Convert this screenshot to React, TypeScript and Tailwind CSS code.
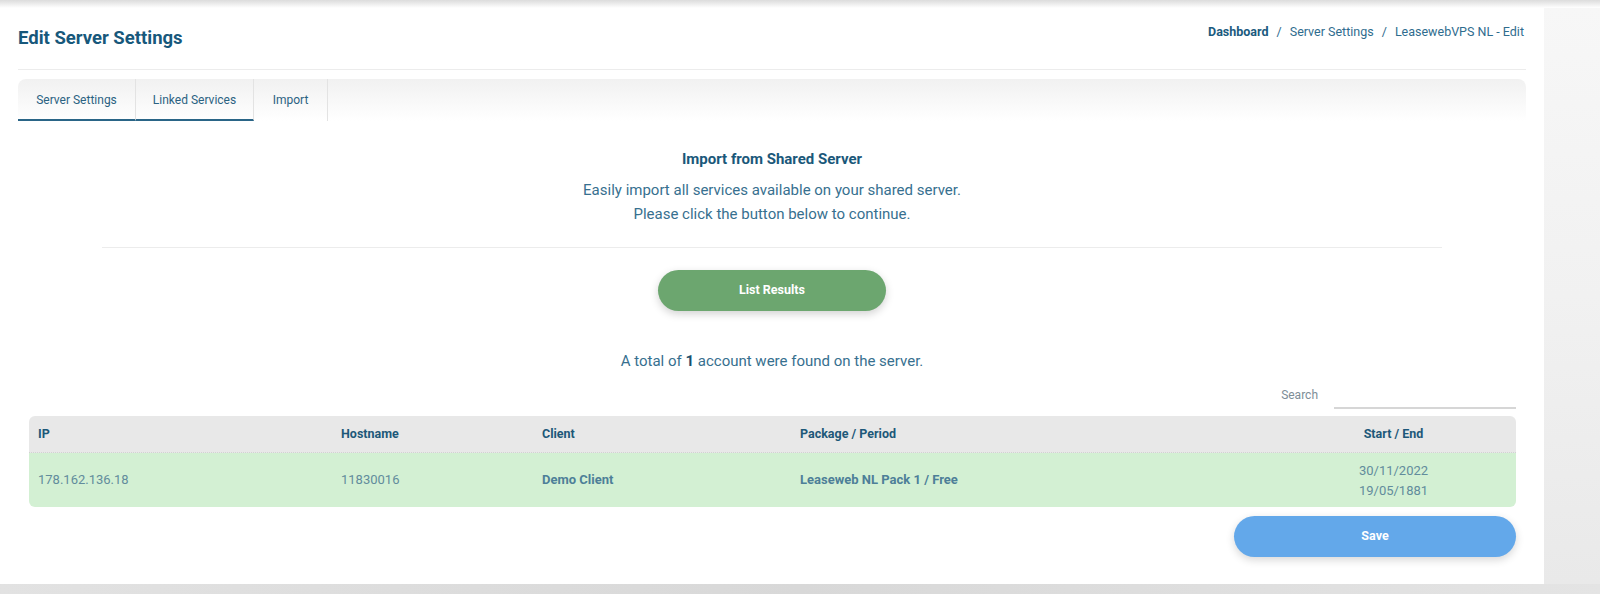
import React from "react";

const tabs = [
  { label: "Server Settings", w: "w-[118px]", underline: true },
  { label: "Linked Services", w: "w-[118px]", underline: true },
  { label: "Import", w: "w-[74px]", underline: false },
];

const rows = [
  {
    ip: "178.162.136.18",
    hostname: "11830016",
    client: "Demo Client",
    pkg: "Leaseweb NL Pack 1 / Free",
    start: "30/11/2022",
    end: "19/05/1881",
  },
];

export default function App() {
  return (
    <div
      className="relative h-[594px] w-[1600px] overflow-hidden bg-[#e6e6e6]"
      style={{ fontFamily: "Roboto, 'Noto Sans', sans-serif" }}
    >
      {/* top nav shadow */}
      <div className="h-[8px] w-full bg-gradient-to-b from-[#dcdcdc] to-white" />

      <div className="flex">
        <div className="h-[576px] w-[1544px] bg-white">
          {/* header */}
          <div className="px-[18px] pt-[17px]">
            <div className="flex items-start justify-between">
              <h1 className="text-[18.5px] font-bold leading-[26px] text-[#17587b]">Edit Server Settings</h1>
              <div className="mr-[2px] -mt-[2px] text-[12.5px] leading-[18px] text-[#2f6c8e]">
                <span className="font-bold text-[#1b5a7e]">Dashboard</span>
                <span className="mx-[8px]">/</span>
                <span>Server Settings</span>
                <span className="mx-[8px]">/</span>
                <span>LeasewebVPS NL - Edit</span>
              </div>
            </div>
            <div className="mt-[18px] h-px bg-[#ececec]" />

            {/* tabs */}
            <div className="mt-[9px] flex h-[42px] rounded-t-[8px] bg-gradient-to-b from-[#f1f1f1] to-white">
              {tabs.map((t) => (
                <div
                  key={t.label}
                  className={`flex ${t.w} items-center justify-center border-r border-[#e3e3e3] text-[12px] text-[#2b6282] ${
                    t.underline ? "border-b-2 border-b-[#2a6587] pt-[2px]" : ""
                  }`}
                >
                  {t.label}
                </div>
              ))}
            </div>
          </div>

          {/* import section */}
          <div className="flex flex-col items-center">
            <h2 className="mt-[28px] text-[15px] font-bold leading-[20px] text-[#1a587a]">Import from Shared Server</h2>
            <p className="mt-[9px] text-center text-[15px] leading-[24px] text-[#37708f]">
              Easily import all services available on your shared server.
              <br />
              Please click the button below to continue.
            </p>
          </div>
          <div className="mx-[102px] mt-[21px] h-px bg-[#ececec]" />

          <div className="flex justify-center">
            <button className="mt-[22px] h-[41px] w-[228px] rounded-full bg-[#6ca66f] text-[12.5px] font-bold text-white shadow-[0_3px_8px_rgba(0,0,0,0.18)]">
              List Results
            </button>
          </div>

          <p className="mt-[40px] text-center text-[15px] leading-[20px] text-[#37708f]">
            A total of <span className="font-bold text-[#1a4f6e]">1</span> account were found on the server.
          </p>

          {/* search */}
          <div className="mr-[28px] mt-[10px] flex h-[28px] items-center justify-end">
            <span className="mr-[16px] text-[12px] text-[#7d8d97]">Search</span>
            <div className="h-[28px] w-[182px] border-b-2 border-[#d6d6d6]" />
          </div>

          {/* table */}
          <div className="ml-[29px] mt-[7px] w-[1487px]">
            <div className="grid h-[37px] grid-cols-[312px_201px_258px_471px_245px] items-center rounded-t-[6px] border-b border-dotted border-[#d2d2d2] bg-[#e8e8e8] text-[12.5px] font-bold text-[#1d5879]">
              <div className="pl-[9px]">IP</div>
              <div>Hostname</div>
              <div>Client</div>
              <div>Package / Period</div>
              <div className="text-center">Start / End</div>
            </div>
            {rows.map((r) => (
              <div
                key={r.ip}
                className="grid h-[54px] grid-cols-[312px_201px_258px_471px_245px] items-center rounded-b-[6px] bg-[#d3f0d3] text-[13px] text-[#628c9c]"
              >
                <div className="pl-[9px]">{r.ip}</div>
                <div>{r.hostname}</div>
                <div className="font-bold text-[#4d7f98]">{r.client}</div>
                <div className="font-bold text-[#4d7f98]">{r.pkg}</div>
                <div className="pt-[2px] text-center leading-[20px]">
                  {r.start}
                  <br />
                  {r.end}
                </div>
              </div>
            ))}
          </div>

          <div className="mr-[28px] mt-[9px] flex justify-end">
            <button className="h-[41px] w-[282px] rounded-full bg-[#63a8ea] text-[12.5px] font-bold text-white shadow-[0_3px_8px_rgba(0,0,0,0.16)]">
              Save
            </button>
          </div>
        </div>

        {/* backdrop at right */}
        <div className="h-[576px] flex-1 bg-gradient-to-b from-[#f7f7f7] via-[#f1f1f1] to-[#e9e9e9]" />
      </div>

      {/* backdrop at bottom */}
      <div className="h-[10px] w-full bg-gradient-to-r from-[#e2e2e2] via-[#d8d8d8] to-[#e4e4e4]" />
    </div>
  );
}
